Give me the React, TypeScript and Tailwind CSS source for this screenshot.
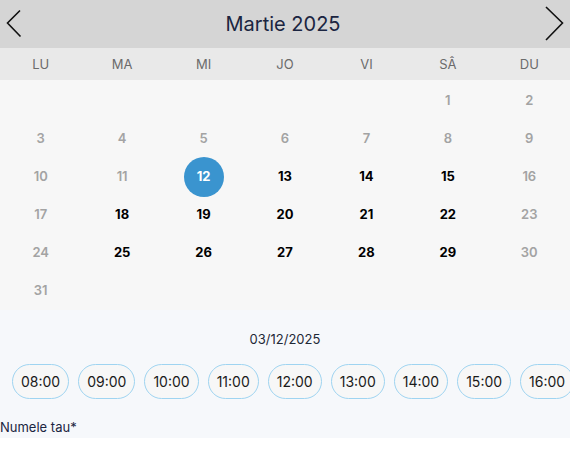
import React from "react";

const weekdays = ["LU", "MA", "MI", "JO", "VI", "SÂ", "DU"];
const times = ["08:00", "09:00", "10:00", "11:00", "12:00", "13:00", "14:00", "15:00", "16:00"];

// March 2025 starts on a Saturday
const cells: (number | null)[] = [null, null, null, null, null, ...Array.from({ length: 31 }, (_, i) => i + 1)];
const active = [13, 14, 15, 18, 19, 20, 21, 22, 25, 26, 27, 28, 29];

function Day({ n }: { n: number | null }) {
  if (n === null) return <div className="h-[38px]" />;
  if (n === 12) {
    return (
      <div className="h-[38px] flex items-center justify-center">
        <div className="w-10 h-10 rounded-full bg-[#3a94cf] flex items-center justify-center text-white text-[13px] font-bold">
          12
        </div>
      </div>
    );
  }
  const on = active.includes(n);
  return (
    <div
      className={
        on
          ? "h-[38px] flex items-center justify-center text-[13px] font-bold text-black"
          : "h-[38px] flex items-center justify-center text-[13px] font-semibold text-[#a3a3a3]"
      }
    >
      {n}
    </div>
  );
}

export default function App() {
  return (
    <div className="w-[570px] h-[472px] overflow-hidden bg-white font-['Inter',sans-serif]">
      <div className="h-12 bg-[#d5d5d5] flex items-center justify-between pl-[6px] pr-[6px]">
        <svg width="16" height="30" viewBox="0 0 16 30" fill="none">
          <path d="M14 1.5 L1.5 14 L14.5 27.5" stroke="#111" strokeWidth="1.6" />
        </svg>
        <h1 className="text-[20px] text-[#1b2541] font-normal">Martie 2025</h1>
        <svg width="20" height="36" viewBox="0 0 20 36" fill="none">
          <path d="M2 1 L18.5 17 L2 34" stroke="#111" strokeWidth="1.6" />
        </svg>
      </div>
      <div className="h-8 bg-[#e9e9e9] grid grid-cols-7 pt-[2px]">
        {weekdays.map((d) => (
          <div key={d} className="flex items-center justify-center text-[13px] text-[#6b6b6b]">
            {d}
          </div>
        ))}
      </div>
      <div className="bg-[#f7f7f7] grid grid-cols-7 pt-[2px] h-[230px]">
        {cells.map((n, i) => (
          <Day key={i} n={n} />
        ))}
      </div>
      <div className="bg-[#f6f8fb] pt-5 h-32">
        <p className="text-center text-[13px] text-[#1f2937] leading-[18px]">03/12/2025</p>
        <div className="flex gap-[9px] pl-3 mt-4 overflow-hidden">
          {times.map((t) => (
            <div
              key={t}
              className="shrink-0 h-[35px] px-2 flex items-center rounded-full border border-[#9fd4f1] bg-[#f7f7f7] text-[14px] text-[#1a1a1a]"
            >
              {t}
            </div>
          ))}
        </div>
        <label className="block mt-5 text-[13px] text-[#1b2541] leading-[16px]">Numele tau*</label>
      </div>
      <div className="h-10 bg-white" />
    </div>
  );
}
